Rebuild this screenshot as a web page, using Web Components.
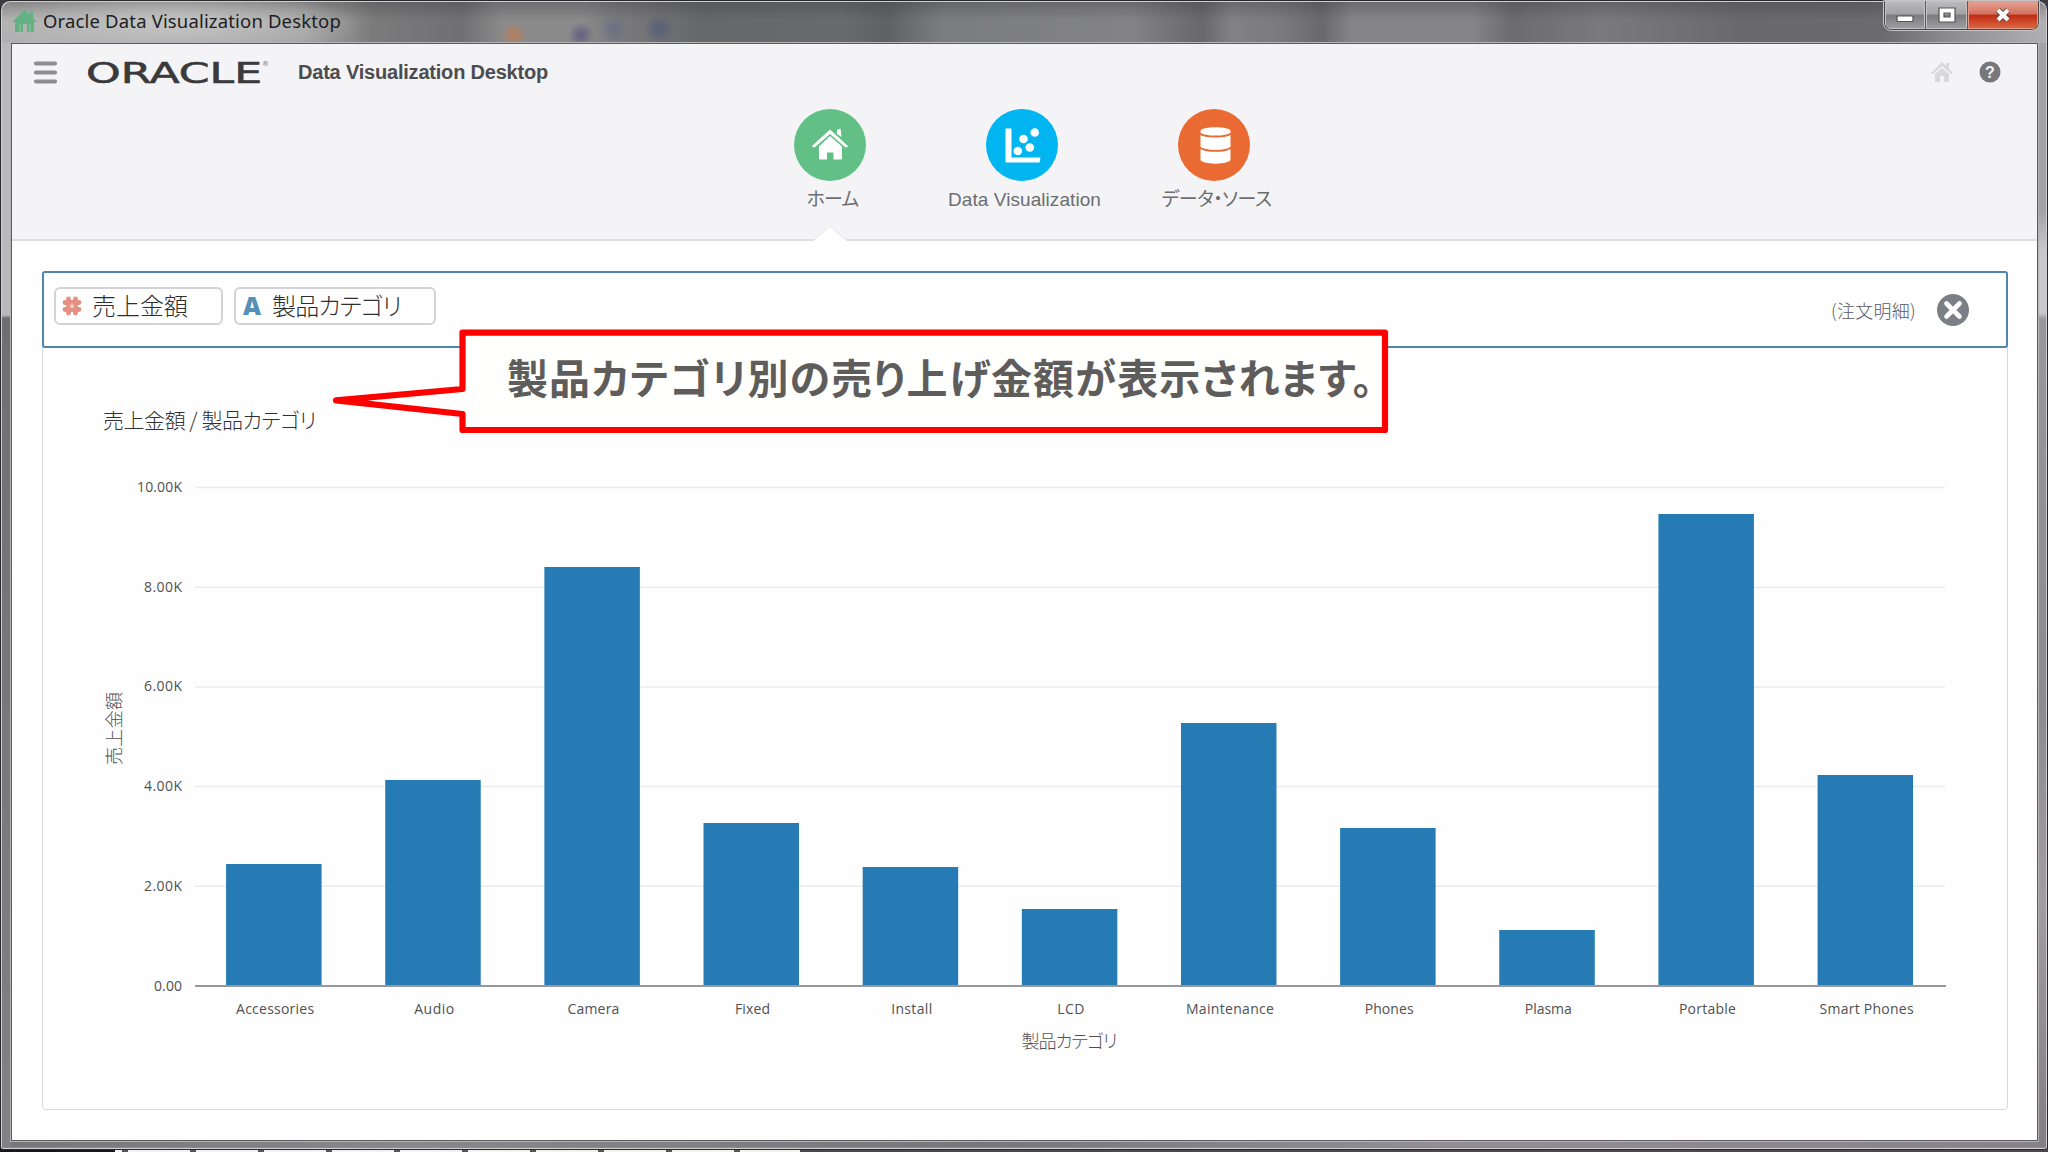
<!DOCTYPE html>
<html lang="ja">
<head>
<meta charset="utf-8">
<title>Oracle Data Visualization Desktop</title>
<style>
  body {
    margin: 0;
    width: 2048px;
    height: 1152px;
    overflow: hidden;
    background: #3c3b3f;
    font-family: "Liberation Sans", "Noto Sans CJK JP", sans-serif;
  }
</style>
</head>
<body>
<app-window>
  <title-bar slot="title">Oracle Data Visualization Desktop</title-bar>
  <app-header slot="header">
    <nav-item color="#62c086" icon="home" width="52" active>ホーム</nav-item>
    <nav-item color="#00b5f0" icon="scatter" width="153">Data Visualization</nav-item>
    <nav-item color="#ea6a33" icon="database" width="110">データ・ソース</nav-item>
  </app-header>
  <answer-card>
    <search-bar slot="search">
      <search-chip icon="hash" style="width: 169px"><fit-text width="96">売上金額</fit-text></search-chip>
      <search-chip icon="attr" style="width: 202px"><fit-text width="129">製品カテゴリ</fit-text></search-chip>
      <fit-text slot="source" width="85">(注文明細)</fit-text>
    </search-bar>
    <fit-text slot="heading" width="213">売上金額 / 製品カテゴリ</fit-text>
    <bar-chart></bar-chart>
  </answer-card>
</app-window>
<call-out><fit-text width="867">製品カテゴリ別の売り上げ金額が表示されます。</fit-text></call-out>

<script>
const ICONS = {
  home: `
    <svg width="72" height="72" viewBox="0 0 72 72" fill="#fff">
      <path d="M36 20.500L54.500 37.500L51.500 38.500L36 25L20.500 38.500L17.500 37.500Z"/>
      <path d="M43 21L46.500 19.500L47.500 28L43 25Z"/>
      <path d="M36 27L48 37.500V49.500Q48 50.500 47 50.500H39.500V43.500H33V50.500H26Q25 50.500 25 49.500V37.500Z"/>
    </svg>`,
  scatter: `
    <svg width="72" height="72" viewBox="0 0 72 72" fill="#fff">
      <path d="M19.500 19.500H25.500V48.500H54.500L53.500 53.500H19.500Z"/>
      <circle cx="31.800" cy="42" r="4.300"/><circle cx="37.500" cy="30" r="4.300"/>
      <circle cx="43.800" cy="38.500" r="4.300"/><circle cx="48.700" cy="23.500" r="4.300"/>
    </svg>`,
  database: `
    <svg width="72" height="72" viewBox="0 0 72 72">
      <path fill="#fff" d="M22.500 22C22.500 17 52.500 17 52.500 22V50.500C52.500 56 22.500 56 22.500 50.500Z"/>
      <path fill="none" stroke="#ea6a33" stroke-width="1.800" d="M22 24.500C27 28.500 48 28.500 53 24.500M22 38.500C27 43 48 43 53 38.500"/>
    </svg>`,
  hash: `
    <svg width="20" height="20" viewBox="0 0 20 20" fill="none" stroke="#e58f83" stroke-width="4.800">
      <path d="M6.500 3V17M13.500 3V17M3 6.500H17M3 13.500H17" stroke-linecap="round"/>
      <path d="M10 7.500V12.500M7.500 10H12.500" stroke="#f6cfc9" stroke-width="1.500"/>
    </svg>`,
  attr: `
    <svg width="20" height="34" viewBox="0 -7 20 34" overflow="visible">
      <text x="10" y="19" text-anchor="middle" textLength="18" lengthAdjust="spacingAndGlyphs"
        font-family="Open Sans" font-weight="800" font-size="24" fill="#5590b5">A</text>
    </svg>`
};

// Sets the letter spacing so that a line of text takes exactly the given width
class FitText extends HTMLElement {
  constructor() {
    super();
    this.attachShadow({ mode: 'open' });
  }

  connectedCallback() {
    this.shadowRoot.innerHTML = `
      <style>
        :host {
          display: inline-block;
          white-space: nowrap;
          font-feature-settings: "palt";
        }
      </style>
      <slot></slot>
    `;
    const width = Number(this.getAttribute('width'));
    const range = document.createRange();
    range.selectNodeContents(this);
    const natural = range.getBoundingClientRect().width;
    const count = [...this.textContent].length;
    this.style.width = `${width}px`;
    this.style.letterSpacing = `${(width - natural) / count}px`;
  }
}

class AppWindow extends HTMLElement {
  constructor() {
    super();
    this.attachShadow({ mode: 'open' });
  }

  connectedCallback() {
    this.shadowRoot.innerHTML = `
      <style>
        :host {
          display: flex;
          flex-direction: column;
          box-sizing: border-box;
          height: 1152px;
          background: linear-gradient(90deg, #17171b 115px, transparent 115px 800px, #4a494d 800px) 0 1149px / 100% 3px no-repeat,
            repeating-linear-gradient(90deg, #f2f2f2 0 54px, #555 54px 60px, #f2f2f2 60px 68px) 0 1149px / 100% 3px no-repeat,
            #3c3b3f;
        }
        .frame {
          display: flex;
          flex-direction: column;
          box-sizing: border-box;
          height: 1150px;
          padding: 0 9px 8px 10px;
          border: 1px solid #29292d;
          border-radius: 10px 10px 3px 3px;
          background:
            linear-gradient(180deg, #b9b9bb 0 314px, #6f6f71 317px, #828284) 0 0 / 10px 100% no-repeat,
            linear-gradient(180deg, #a2a2a5 0 210px, #c8c8ca 250px 312px, #98989b 318px, #8b8a8e 700px, #a09da2 900px, #817e83) 100% 0 / 9px 100% no-repeat,
            linear-gradient(90deg, #77777a, #88888b 20%, #77767a 48%, #918f93 70%, #858387);
          box-shadow: inset 0 0 0 1px #cfcfd1, inset 0 -1px 0 1px #8b8a8e;
        }
        .client {
          flex: 1;
          display: flex;
          flex-direction: column;
          border: 1px solid #5b5a5e;
          outline: 1px solid #b5b5b8;
          background: #fefefe;
          z-index: 1;
        }
      </style>
      <div class="frame">
        <slot name="title"></slot>
        <div class="client">
          <slot name="header"></slot>
          <slot></slot>
        </div>
      </div>
    `;
  }
}

class TitleBar extends HTMLElement {
  constructor() {
    super();
    this.attachShadow({ mode: 'open' });
  }

  connectedCallback() {
    this.shadowRoot.innerHTML = `
      <style>
        :host {
          display: flex;
          justify-content: space-between;
          align-items: flex-start;
          height: 41px;
          margin: 1px -8px 0 -9px;
          border-radius: 9px 9px 0 0;
          background:
            radial-gradient(circle at 512px 33px, rgba(190, 125, 85, 0.700) 3px, transparent 13px),
            radial-gradient(circle at 579px 33px, rgba(95, 88, 125, 0.700) 3px, transparent 13px),
            radial-gradient(circle at 612px 27px, rgba(95, 105, 135, 0.500) 3px, transparent 14px),
            radial-gradient(circle at 657px 27px, rgba(75, 88, 120, 0.600) 3px, transparent 15px),
            radial-gradient(ellipse 190px 34px at 170px 22px, rgba(200, 200, 200, 0.900), transparent),
            linear-gradient(180deg, rgba(60, 60, 62, 0.350), transparent 18px),
            linear-gradient(90deg, #b0b0b0 0, #a2a2a2 300px, #8d8d8d 345px, #7b7b7c 370px,
              #707072 460px, #8a8a8b 500px, #8a8a8b 580px, #7c7c7e 610px, #66676a 700px, #696a6c 840px,
              #606163 885px, #7b7c7e 940px, #838385 1130px, #68686a 1200px, #828284 1230px,
              #7a7a7c 1280px, #69696b 1320px, #858587 1350px, #858587 1470px, #6c6c6e 1510px,
              #7a7a7c 1600px, #69696b 1740px, #6b6b6d 1880px, #929294 1960px, #b0b0b2 100%);
        }
        .name {
          display: flex;
          align-items: center;
          gap: 6px;
          padding: 5px 0 0 10px;
          font-family: "Noto Sans", sans-serif;
          font-size: 18.500px;
          line-height: 28px;
          color: #1d1d1f;
        }
        .buttons {
          display: flex;
          box-sizing: border-box;
          height: 29px;
          width: 155px;
          margin: -1px 7px 0 0;
          border: 1px solid #4a494c;
          border-top: none;
          border-radius: 0 0 7px 7px;
          overflow: hidden;
          outline: 1px solid #c4c4c6;
        }
        .buttons div {
          display: flex;
          justify-content: center;
          align-items: center;
          width: 41px;
          border-right: 1px solid #58575a;
          box-shadow: inset 0 0 0 1px #c3c3c5;
          background: linear-gradient(#bcbcbe, #a3a3a5 45%, #7c7c7f 52%, #a0a0a2);
        }
        .buttons div:last-child {
          width: 71px;
          border: none;
          box-shadow: inset 0 0 0 1px #e69a8a;
          background: linear-gradient(#e8a596, #d27260 45%, #bf2d12 52%, #dd6a45);
        }
      </style>
      <div class="name">
        <svg width="25" height="22" viewBox="0 0 25 22" fill="#64b184">
          <path d="M12.500 0L18 5V2H21V8L25 12H22V21Q22 22 21 22H15V14H11V22H4Q3 22 3 21V12H0Z"/>
          <path d="M8 14V22M18 13V22" stroke="#8fc5a4"/>
        </svg>
        <fit-text width="298"><slot></slot></fit-text>
      </div>
      <div class="buttons">
        <div><svg width="18" height="16" viewBox="0 0 18 16"><rect x="1" y="9" width="16" height="5.500" rx="1" fill="#fff" stroke="#55555a" stroke-width="1.200"/></svg></div>
        <div><svg width="18" height="16" viewBox="0 0 18 16"><path d="M1 1H17V15H1ZM6 6V10H12V6Z" fill="#fff" fill-rule="evenodd" stroke="#55555a" stroke-width="1.200"/></svg></div>
        <div><svg width="18" height="16" viewBox="0 0 18 16"><path d="M4 3L14 13M14 3L4 13" stroke="#5d3a3a" stroke-width="6"/><path d="M4 3L14 13M14 3L4 13" stroke="#fff" stroke-width="4.200"/></svg></div>
      </div>
    `;
    // the slotted title is measured here, the inner text of fit-text is only a slot
    const fit = this.shadowRoot.querySelector('fit-text');
    fit.style.letterSpacing = '0px';
    const range = document.createRange();
    range.selectNodeContents(this);
    const natural = range.getBoundingClientRect().width;
    fit.style.letterSpacing = `${(298 - natural) / this.textContent.length}px`;
  }
}

class AppHeader extends HTMLElement {
  constructor() {
    super();
    this.attachShadow({ mode: 'open' });
  }

  connectedCallback() {
    this.shadowRoot.innerHTML = `
      <style>
        :host {
          display: flex;
          flex-direction: column;
          box-sizing: border-box;
          height: 197px;
          border-bottom: 2px solid #dfdee1;
          background: #f4f4f6;
        }
        .bar {
          display: flex;
          align-items: center;
          height: 58px;
          padding: 0 36px 0 21px;
        }
        .logo {
          margin: 0 28px 0 28px;
        }
        .name {
          flex: 1;
          font-size: 20px;
          font-weight: bold;
          color: #4c4c50;
        }
        .help {
          margin-left: 26px;
        }
        nav {
          display: flex;
          padding: 9px 0 0 722px;
        }
      </style>
      <div class="bar">
        <svg width="25" height="23" viewBox="0 0 25 23" stroke="#8e8e90" stroke-width="4.200" stroke-linecap="round">
          <path d="M3 2.500H22M3 11.500H22M3 20.500H22"/>
        </svg>
        <svg class="logo" width="184" height="38" viewBox="0 0 184 38" font-family="DejaVu Sans" fill="#3a3a3c">
          <text x="0" y="29.500" font-size="28.500" textLength="176" lengthAdjust="spacingAndGlyphs" stroke="#3a3a3c" stroke-width="0.600">ORACLE</text>
          <text x="176" y="13" font-size="7" fill="#77777a">®</text>
        </svg>
        <div class="name"><fit-text width="250">Data Visualization Desktop</fit-text></div>
        <svg width="22" height="22" viewBox="0 0 22 22" fill="#d9d9dc">
          <path d="M11 1L15 5V2H18V8L22 12L20 13L11 5L2 13L0 12Z"/>
          <path d="M11 7L18 13V21H13V15H9V21H4V13Z"/>
        </svg>
        <svg class="help" width="22" height="22" viewBox="0 0 22 22">
          <circle cx="11" cy="11" r="10.500" fill="#77787c"/>
          <text x="11" y="17" text-anchor="middle" font-family="Liberation Sans" font-weight="bold" font-size="16" fill="#f4f4f6">?</text>
        </svg>
      </div>
      <nav><slot></slot></nav>
    `;
  }
}

class NavItem extends HTMLElement {
  constructor() {
    super();
    this.attachShadow({ mode: 'open' });
  }

  connectedCallback() {
    const color = this.getAttribute('color');
    const icon = this.getAttribute('icon');
    const width = this.getAttribute('width');
    const label = this.textContent;

    this.shadowRoot.innerHTML = `
      <style>
        :host {
          display: flex;
          flex-direction: column;
          align-items: center;
          width: 192px;
          height: 130px;
          font-size: 19px;
          line-height: 24px;
          color: #6c6d70;
        }
        .circle {
          width: 72px;
          height: 72px;
          border-radius: 50%;
          background: ${color};
        }
        .circle svg {
          display: block;
        }
        .label {
          margin: 7px 0 0 5px;
        }
        .notch {
          display: none;
          flex: none;
          margin-top: 14px;
        }
        :host([active]) .notch {
          display: block;
        }
      </style>
      <div class="circle">${ICONS[icon]}</div>
      <fit-text class="label" width="${width}">${label}</fit-text>
      <svg class="notch" width="34" height="17" viewBox="0 0 34 17">
        <path d="M0 15L17 0L34 15V17H0Z" fill="#fefefe"/>
        <path d="M0 15L17 0L34 15" fill="none" stroke="#e8e8ea"/>
      </svg>
    `;
  }
}

class AnswerCard extends HTMLElement {
  constructor() {
    super();
    this.attachShadow({ mode: 'open' });
  }

  connectedCallback() {
    this.shadowRoot.innerHTML = `
      <style>
        :host {
          display: flex;
          flex-direction: column;
          box-sizing: border-box;
          flex: 1;
          padding: 30px 29px 30px 30px;
        }
        .card {
          flex: 1;
          display: flex;
          flex-direction: column;
          border: 1px solid #d8d8dc;
          border-radius: 4px;
        }
        .heading {
          padding: 57px 0 0 60px;
          height: 34px;
          font-family: "Noto Sans CJK JP", sans-serif;
          font-size: 21px;
          line-height: 31px;
          color: #303033;
          font-weight: 300;
        }
      </style>
      <div class="card">
        <slot name="search"></slot>
        <div class="heading"><slot name="heading"></slot></div>
        <slot></slot>
      </div>
    `;
  }
}

class SearchBar extends HTMLElement {
  constructor() {
    super();
    this.attachShadow({ mode: 'open' });
  }

  connectedCallback() {
    this.shadowRoot.innerHTML = `
      <style>
        :host {
          display: flex;
          align-items: flex-start;
          box-sizing: border-box;
          height: 77px;
          margin: -1px;
          padding: 14px 37px 0 10px;
          border: 2px solid #4f86ab;
          border-radius: 3px;
          background: #fff;
        }
        .chips {
          flex: 1;
          display: flex;
          gap: 11px;
        }
        .source {
          display: flex;
          align-items: center;
          gap: 21px;
          height: 46px;
          font-family: "Noto Sans CJK JP", sans-serif;
          font-size: 18px;
          font-weight: 300;
          color: #5a5a5e;
        }
      </style>
      <div class="chips"><slot></slot></div>
      <div class="source">
        <slot name="source"></slot>
        <svg width="32" height="32" viewBox="0 0 32 32">
          <circle cx="16" cy="16" r="16" fill="#7c8086"/>
          <path d="M9.500 9.500L22.500 22.500M22.500 9.500L9.500 22.500" stroke="#fff" stroke-width="4.600" stroke-linecap="round"/>
        </svg>
      </div>
    `;
  }
}

class SearchChip extends HTMLElement {
  constructor() {
    super();
    this.attachShadow({ mode: 'open' });
  }

  connectedCallback() {
    const icon = this.getAttribute('icon');

    this.shadowRoot.innerHTML = `
      <style>
        :host {
          display: flex;
          align-items: center;
          gap: 10px;
          box-sizing: border-box;
          height: 38px;
          padding-left: 6px;
          border: 2px solid #d2d2d7;
          border-radius: 6px;
          font-size: 24px;
          font-weight: 300;
          line-height: 34px;
          color: #2e2e31;
        }
        svg {
          display: block;
          flex: none;
        }
        slot {
          display: block;
          padding-top: 2px;
        }
      </style>
      ${ICONS[icon]}
      <slot></slot>
    `;
  }
}

class BarChart extends HTMLElement {
  constructor() {
    super();
    this.attachShadow({ mode: 'open' });
  }

  connectedCallback() {
    // label, bar height in px, label width in px
    const data = [
      ['Accessories', 122, 78], ['Audio', 206, 40], ['Camera', 419, 52], ['Fixed', 163, 35],
      ['Install', 119, 41], ['LCD', 77, 27], ['Maintenance', 263, 88], ['Phones', 158, 49],
      ['Plasma', 56, 47], ['Portable', 472, 57], ['Smart Phones', 211, 94]
    ];
    const ticks = [['10.00K', 45], ['8.00K', 38], ['6.00K', 38], ['4.00K', 38], ['2.00K', 38], ['0.00', 28]];
    const left = 152;
    const base = 548;
    const step = 159.15;

    const grid = ticks.map(([label, width], i) => {
      const y = base - (5 - i) * 99.7;
      const line = i < 5 ? `<path d="M${left} ${y}H1902" stroke="#ebebef" stroke-width="1.500"/>` : '';
      return `${line}<text x="${139 - width}" y="${y + 4.5}" textLength="${width}">${label}</text>`;
    }).join('');

    const bars = data.map(([label, height, width], i) => {
      const center = left + step * (i + 0.5);
      return `
        <rect x="${center - 48.5}" y="${base - height}" width="95.500" height="${height}" fill="#267bb4"/>
        <text x="${center - width / 2 + 0.5}" y="${base + 28}" textLength="${width}">${label}</text>`;
    }).join('');

    this.shadowRoot.innerHTML = `
      <style>
        :host {
          display: block;
          height: 660px;
        }
        svg {
          display: block;
        }
        .title {
          font-family: "Noto Sans CJK JP", sans-serif;
          font-size: 18px;
          font-weight: 300;
          font-feature-settings: "palt";
        }
      </style>
      <svg width="1961" height="660" viewBox="0 0 1961 660" font-family="Open Sans, sans-serif" font-size="14" fill="#505054">
        ${grid}
        ${bars}
        <path d="M${left} ${base}H1903" stroke="#98989c" stroke-width="1.800"/>
        <text class="title" x="978.500" y="610" textLength="96">製品カテゴリ</text>
        <text class="title" transform="translate(78 327) rotate(-90)" textLength="73">売上金額</text>
      </svg>
    `;
  }
}

class CallOut extends HTMLElement {
  constructor() {
    super();
    this.attachShadow({ mode: 'open' });
  }

  connectedCallback() {
    this.shadowRoot.innerHTML = `
      <style>
        :host {
          display: grid;
          position: absolute;
          left: 330px;
          top: 326px;
          width: 1062px;
          height: 112px;
          z-index: 2;
          font-family: "Noto Sans CJK JP", sans-serif;
          font-size: 41px;
          font-weight: 700;
          line-height: 60px;
          color: #5f5d5b;
        }
        svg, .text {
          grid-area: 1 / 1;
        }
        .text {
          padding: 20px 0 0 177px;
        }
      </style>
      <svg width="1062" height="112" viewBox="0 0 1062 112">
        <path d="M132.500 6.700H1055V104H132.500V88L6 74.300L132.500 63Z" fill="#fffffe" stroke="#fe0000" stroke-width="6.200" stroke-linejoin="round"/>
      </svg>
      <div class="text"><slot></slot></div>
    `;
  }
}

customElements.define('app-window', AppWindow);
customElements.define('title-bar', TitleBar);
customElements.define('app-header', AppHeader);
customElements.define('nav-item', NavItem);
customElements.define('answer-card', AnswerCard);
customElements.define('search-bar', SearchBar);
customElements.define('search-chip', SearchChip);
customElements.define('bar-chart', BarChart);
customElements.define('call-out', CallOut);
// last, so that every font size around the text is already set
customElements.define('fit-text', FitText);
</script>
</body>
</html>
